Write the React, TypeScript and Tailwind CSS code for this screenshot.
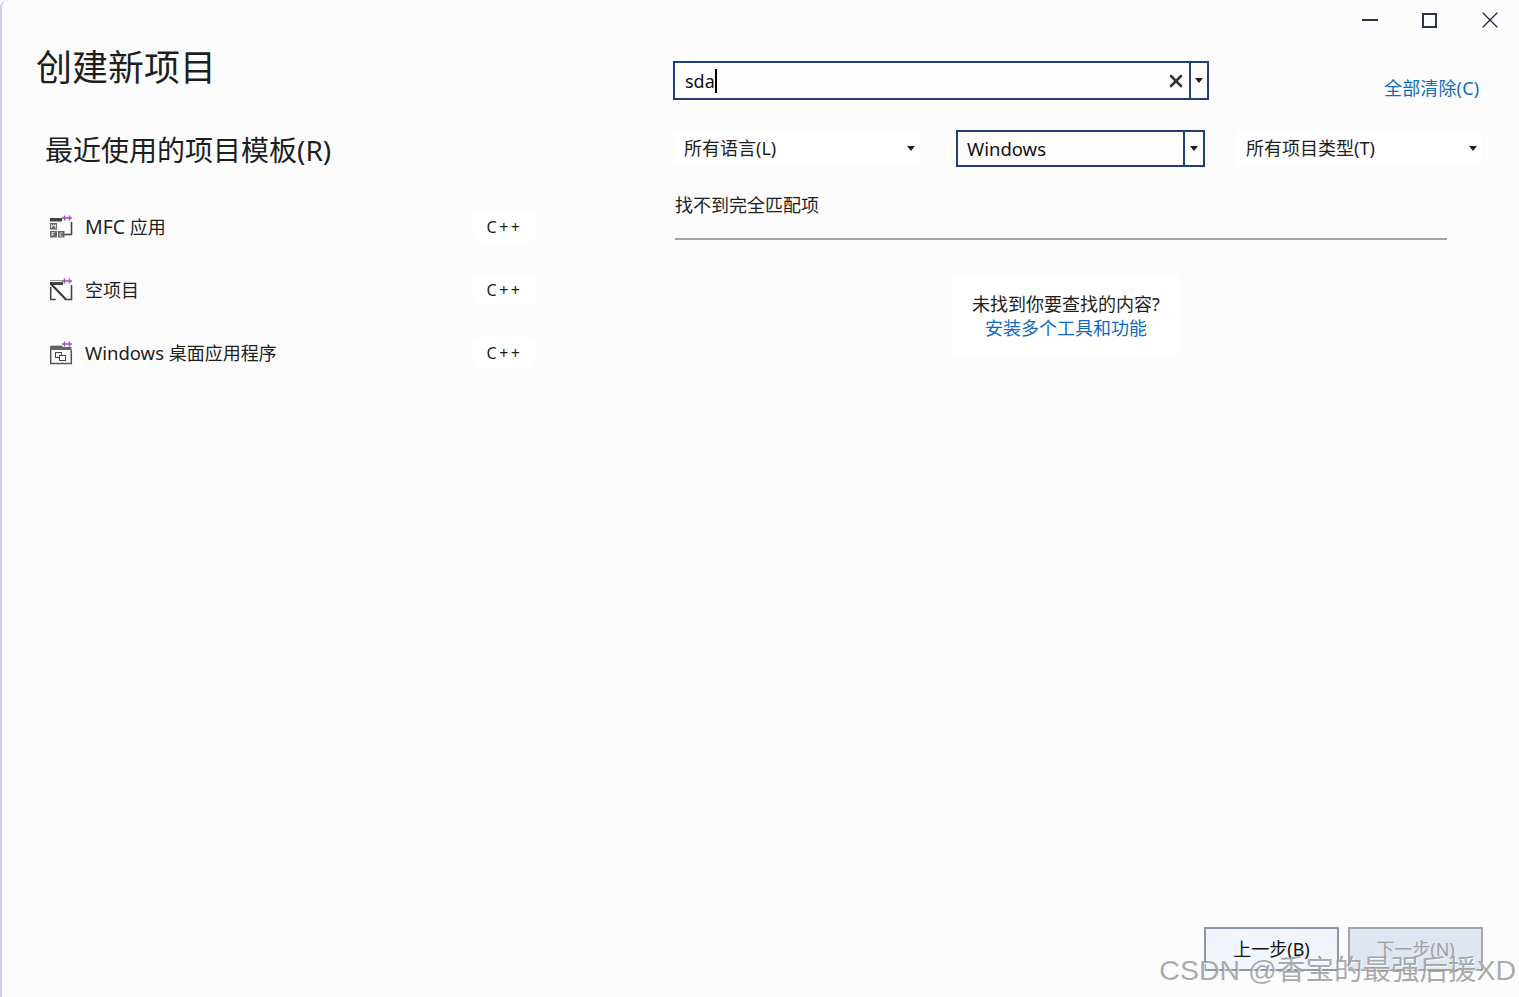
import { X } from "lucide-react"

const font = "font-['Noto_Sans','Noto_Sans_CJK_SC',sans-serif]"

function Plus({ x, y }: { x: number; y: number }) {
  return <path d={`M${x - 2.5} ${y}h5M${x} ${y - 2.5}v5`} stroke="#a050bc" strokeWidth="1.5" />
}

function MfcIcon() {
  return (
    <svg width="24" height="24" viewBox="0 0 24 24" fill="none">
      <rect x="1" y="3" width="12" height="3.5" fill="#444" />
      <Plus x={15.5} y={3} />
      <Plus x={20.5} y={3} />
      <path d="M22.5 7v12.5H15" stroke="#444" strokeWidth="1.6" />
      <rect x="1" y="8" width="7" height="6.5" fill="#666" />
      <rect x="1" y="16" width="7" height="6.5" fill="#666" />
      <rect x="9" y="16" width="6.5" height="6.5" fill="#666" />
      <path d="M2.5 13V9.5l1 2 1-2 1 2 1-2V13M3 21v-3.5h2.5M3 19.5h2M13.5 18h-2.5v3h2.5" stroke="#fff" strokeWidth=".7" />
    </svg>
  )
}

function EmptyIcon() {
  return (
    <svg width="24" height="24" viewBox="0 0 24 24" fill="none">
      <path d="M1 2.5h13" stroke="#999" strokeWidth="1" />
      <rect x="1" y="4" width="13" height="3" fill="#444" />
      <Plus x={15.5} y={3} />
      <Plus x={20.5} y={3} />
      <path d="M22.5 7v14.5H16M1.7 9v12.5h5" stroke="#444" strokeWidth="1.6" />
      <path d="M2 6l15 15.5" stroke="#333" strokeWidth="2" />
    </svg>
  )
}

function DesktopIcon() {
  return (
    <svg width="24" height="24" viewBox="0 0 24 24" fill="none">
      <path d="M1.5 5.5h12M1.7 5.5v17h20.6V9" stroke="#555" strokeWidth="1.5" />
      <rect x="1" y="6" width="21.5" height="3" fill="#666" />
      <Plus x={15.5} y={3} />
      <Plus x={20.5} y={3} />
      <rect x="6.5" y="11.5" width="6" height="5" stroke="#444" strokeWidth="1" />
      <rect x="10.5" y="14.5" width="6" height="5" fill="#fcfcfd" stroke="#444" strokeWidth="1" />
    </svg>
  )
}

function Caret() {
  return <span className="h-0 w-0 border-x-[4.5px] border-t-[5px] border-x-transparent border-t-[#1f1f1f]" />
}

function Template({ icon, name }: { icon: React.ReactNode; name: React.ReactNode }) {
  return (
    <div className="flex h-[63px] w-[491px] items-center">
      <span className="ml-[4px] w-[36px] shrink-0">{icon}</span>
      <span className="flex-1 text-[18px] leading-[26px] text-[#1e1e1e]">{name}</span>
      <span className="flex h-[31px] w-[63px] items-center justify-center rounded-lg bg-white text-[16px] tracking-[2.5px] text-[#1e1e1e]">
        C++
      </span>
    </div>
  )
}

export default function App() {
  return (
    <div className={`${font} relative flex h-[997px] w-full flex-col overflow-hidden rounded-tl-lg border-l-2 border-[#c9d1e3] bg-[#fcfcfd]`}>
      <div className="flex h-[40px] justify-end text-[#1f2a3a]">
        <button className="flex w-[60px] items-center justify-center pl-[2px]">
          <span className="h-[2px] w-[16px] bg-[#2a3444]" />
        </button>
        <button className="flex w-[60px] items-center justify-center pl-[1px]">
          <span className="h-[15px] w-[15px] border-2 border-[#2a3444]" />
        </button>
        <button className="flex w-[60px] items-center justify-center pl-[2px]">
          <X size={28} strokeWidth={1.1} />
        </button>
      </div>

      <div className="flex flex-1">
        <div className="w-[671px] shrink-0">
          <h1 className="ml-[34px] pt-[2px] text-[36px] leading-[52px] text-[#1e1e1e]">创建新项目</h1>
          <h2 className="ml-[43px] mt-[36px] text-[28px] leading-[40px] text-[#1e1e1e]">最近使用的项目模板(R)</h2>
          <div className="ml-[43px] mt-[25px]">
            <Template icon={<MfcIcon />} name={<><span className="text-[19.5px] leading-none">MFC</span> 应用</>} />
            <Template icon={<EmptyIcon />} name="空项目" />
            <Template icon={<DesktopIcon />} name={<><span className="text-[18.5px] leading-none">Windows</span> 桌面应用程序</>} />
          </div>
        </div>

        <div className="flex-1 pt-[21px]">
          <div className="flex">
            <div className="flex h-[39px] w-[536px] items-center border-2 border-[#1f3f7a] bg-[#fdfdfe]">
              <span className="ml-[10px] pt-[1px] text-[18px] text-[#111]">sda</span>
              <span className="h-[24px] w-[2px] bg-black" />
              <span className="flex-1" />
              <X size={20} strokeWidth={3} className="mr-[3px] text-[#333]" />
              <span className="flex h-full w-[18px] items-center justify-center border-l-2 border-[#1f3f7a]">
                <Caret />
              </span>
            </div>
            <a className="ml-[175px] mt-[14px] text-[18px] leading-[26px] tracking-[0.15px] text-[#0f6cbd]">全部清除(C)</a>
          </div>

          <div className="mt-[29px] flex items-center text-[18px] text-[#1e1e1e]">
            <div className="ml-[2px] flex h-[33px] w-[244px] items-center justify-between bg-white pl-[9px] pr-[4px]">
              <span>所有语言(L)</span>
              <Caret />
            </div>
            <div className="ml-[37px] flex h-[37px] w-[249px] items-center border-2 border-[#1f3f7a] bg-[#fdfdfe] pl-[9px]">
              <span className="flex-1 text-[18.5px] text-[#111]">Windows</span>
              <span className="flex h-full w-[20px] items-center justify-center border-l-2 border-[#1f3f7a]">
                <Caret />
              </span>
            </div>
            <div className="ml-[32px] flex h-[33px] w-[245px] items-center justify-between bg-white pl-[9px] pr-[5px]">
              <span>所有项目类型(T)</span>
              <Caret />
            </div>
          </div>

          <p className="ml-[2px] mt-[25px] text-[18px] leading-[26px] text-[#1e1e1e]">找不到完全匹配项</p>
          <div className="ml-[2px] mt-[20px] h-[2px] w-[772px] bg-[#a3a3a3]" />

          <div className="ml-[280px] mt-[36px] flex h-[79px] w-[226px] flex-col items-center justify-center bg-white text-[18px] leading-[24px]">
            <span className="text-[#1e1e1e]">未找到你要查找的内容?</span>
            <a className="text-[#0f6cbd]">安装多个工具和功能</a>
          </div>
        </div>
      </div>

      <div className="flex justify-end gap-[9px] pb-[26px] pr-[36px] text-[18px]">
        <button className="h-[44px] w-[135px] border-2 border-[#8a97ae] bg-[#f2f5fd] text-[#111]">上一步(B)</button>
        <button className="h-[44px] w-[135px] border-2 border-[#a6a6a6] bg-[#dfe6f1] text-[#a0a0a0]">下一步(N)</button>
      </div>

      <div className="pointer-events-none absolute bottom-[9px] right-[3px] font-['Liberation_Sans','Noto_Sans_CJK_SC',sans-serif] text-[28.5px] leading-[36px] text-[#8f8f8f]/75 [text-shadow:1px_1px_1px_rgba(255,255,255,0.9)]">
        CSDN @香宝的最强后援XD
      </div>
    </div>
  )
}
